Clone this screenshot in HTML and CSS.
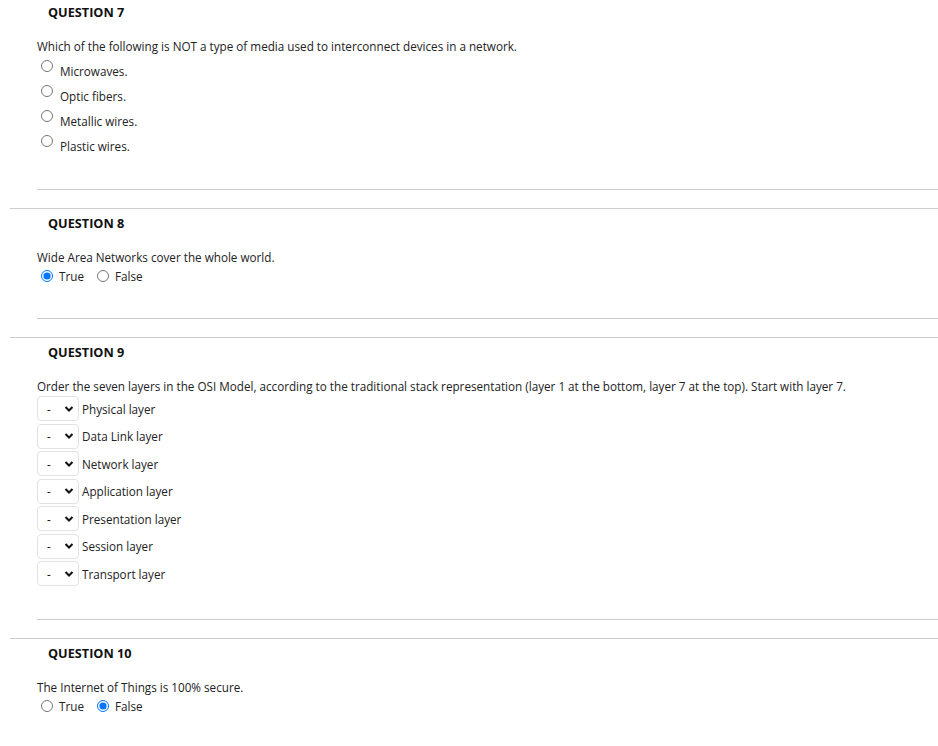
FILE: index.html
```html
<!DOCTYPE html>
<html>
<head>
<meta charset="utf-8">
<link rel="stylesheet" href="styles.css">
</head>
<body>
<div class="question first">
  <h3 class="q-title">QUESTION 7</h3>
  <div class="q-body">
    <p class="q-text">Which of the following is NOT a type of media used to interconnect devices in a network.</p>
    <div class="options">
      <label class="opt"><input type="radio" name="q7"><span>Microwaves.</span></label>
      <label class="opt"><input type="radio" name="q7"><span>Optic fibers.</span></label>
      <label class="opt"><input type="radio" name="q7"><span>Metallic wires.</span></label>
      <label class="opt"><input type="radio" name="q7"><span>Plastic wires.</span></label>
    </div>
    <div class="inner-rule"></div>
  </div>
</div>

<div class="question">
  <h3 class="q-title">QUESTION 8</h3>
  <div class="q-body">
    <p class="q-text">Wide Area Networks cover the whole world.</p>
    <div class="tf">
      <label class="tf-opt"><input type="radio" name="q8" checked><span>True</span></label>
      <label class="tf-opt"><input type="radio" name="q8"><span>False</span></label>
    </div>
    <div class="inner-rule"></div>
  </div>
</div>

<div class="question">
  <h3 class="q-title">QUESTION 9</h3>
  <div class="q-body">
    <p class="q-text">Order the seven layers in the OSI Model, according to the traditional stack representation (layer 1 at the bottom, layer 7 at the top). Start with layer 7.</p>
    <div class="order">
      <div class="order-row"><span class="sel">-<svg class="chev" viewBox="0 0 10 8" width="10" height="8"><path d="M1.5 2 L5 5.5 L8.5 2" fill="none" stroke="#111" stroke-width="2"/></svg></span><span>Physical layer</span></div>
      <div class="order-row"><span class="sel">-<svg class="chev" viewBox="0 0 10 8" width="10" height="8"><path d="M1.5 2 L5 5.5 L8.5 2" fill="none" stroke="#111" stroke-width="2"/></svg></span><span>Data Link layer</span></div>
      <div class="order-row"><span class="sel">-<svg class="chev" viewBox="0 0 10 8" width="10" height="8"><path d="M1.5 2 L5 5.5 L8.5 2" fill="none" stroke="#111" stroke-width="2"/></svg></span><span>Network layer</span></div>
      <div class="order-row"><span class="sel">-<svg class="chev" viewBox="0 0 10 8" width="10" height="8"><path d="M1.5 2 L5 5.5 L8.5 2" fill="none" stroke="#111" stroke-width="2"/></svg></span><span>Application layer</span></div>
      <div class="order-row"><span class="sel">-<svg class="chev" viewBox="0 0 10 8" width="10" height="8"><path d="M1.5 2 L5 5.5 L8.5 2" fill="none" stroke="#111" stroke-width="2"/></svg></span><span>Presentation layer</span></div>
      <div class="order-row"><span class="sel">-<svg class="chev" viewBox="0 0 10 8" width="10" height="8"><path d="M1.5 2 L5 5.5 L8.5 2" fill="none" stroke="#111" stroke-width="2"/></svg></span><span>Session layer</span></div>
      <div class="order-row"><span class="sel">-<svg class="chev" viewBox="0 0 10 8" width="10" height="8"><path d="M1.5 2 L5 5.5 L8.5 2" fill="none" stroke="#111" stroke-width="2"/></svg></span><span>Transport layer</span></div>
    </div>
    <div class="inner-rule"></div>
  </div>
</div>

<div class="question">
  <h3 class="q-title">QUESTION 10</h3>
  <div class="q-body">
    <p class="q-text">The Internet of Things is 100% secure.</p>
    <div class="tf">
      <label class="tf-opt"><input type="radio" name="q10"><span>True</span></label>
      <label class="tf-opt"><input type="radio" name="q10" checked><span>False</span></label>
    </div>
  </div>
</div>
</body>
</html>
```

FILE: styles.css
```css
* { box-sizing: border-box; }
html, body {
  margin: 0;
  padding: 0;
  background: #fff;
}
body {
  font-family: "Open Sans", "Liberation Sans", sans-serif;
  font-size: 11.7px;
  color: #222;
  width: 938px;
}
.question {
  margin-left: 10px;
  border-top: 1px solid #cdcdcd;
  padding-top: 2px;
}
.question.first {
  border-top: none;
  padding-top: 0;
}
.q-title {
  margin: 0 0 13px 38px;
  font-size: 12.7px;
  font-weight: 700;
  line-height: 24px;
  color: #111;
}
.q-body {
  padding-left: 27px;
}
.q-text {
  margin: 0;
  line-height: 18px;
}
.options {
  display: flex;
  flex-direction: column;
  margin-top: 1px;
}
.opt {
  display: flex;
  align-items: flex-start;
  height: 25px;
}
.opt input {
  margin: 4px 0 0 4px;
  width: 12px;
  height: 12px;
}
.opt span {
  margin-left: 7px;
  margin-top: 6px;
  line-height: 18px;
}
.tf {
  display: flex;
  align-items: center;
  height: 18px;
  margin-top: 1px;
}
.tf-opt {
  display: flex;
  align-items: center;
  margin-right: 9px;
}
.tf-opt input {
  margin: 0 0 0 4px;
  width: 12px;
  height: 12px;
}
.tf-opt span {
  margin-left: 6px;
  line-height: 18px;
}
.order {
  display: flex;
  flex-direction: column;
  gap: 2.5px;
  margin-top: 1px;
  margin-bottom: 3px;
}
.order-row {
  display: flex;
  align-items: center;
  height: 25px;
}
.sel {
  display: flex;
  align-items: center;
  justify-content: space-between;
  width: 42px;
  height: 25px;
  border: 1px solid #e2e2e2;
  border-radius: 4px;
  padding: 0 4px 0 9px;
  margin-right: 3px;
  background: #fff;
  color: #111;
}
.chev {
  display: block;
}
.inner-rule {
  border-top: 1px solid #cdcdcd;
  margin-top: 33px;
  height: 19px;
}
```
